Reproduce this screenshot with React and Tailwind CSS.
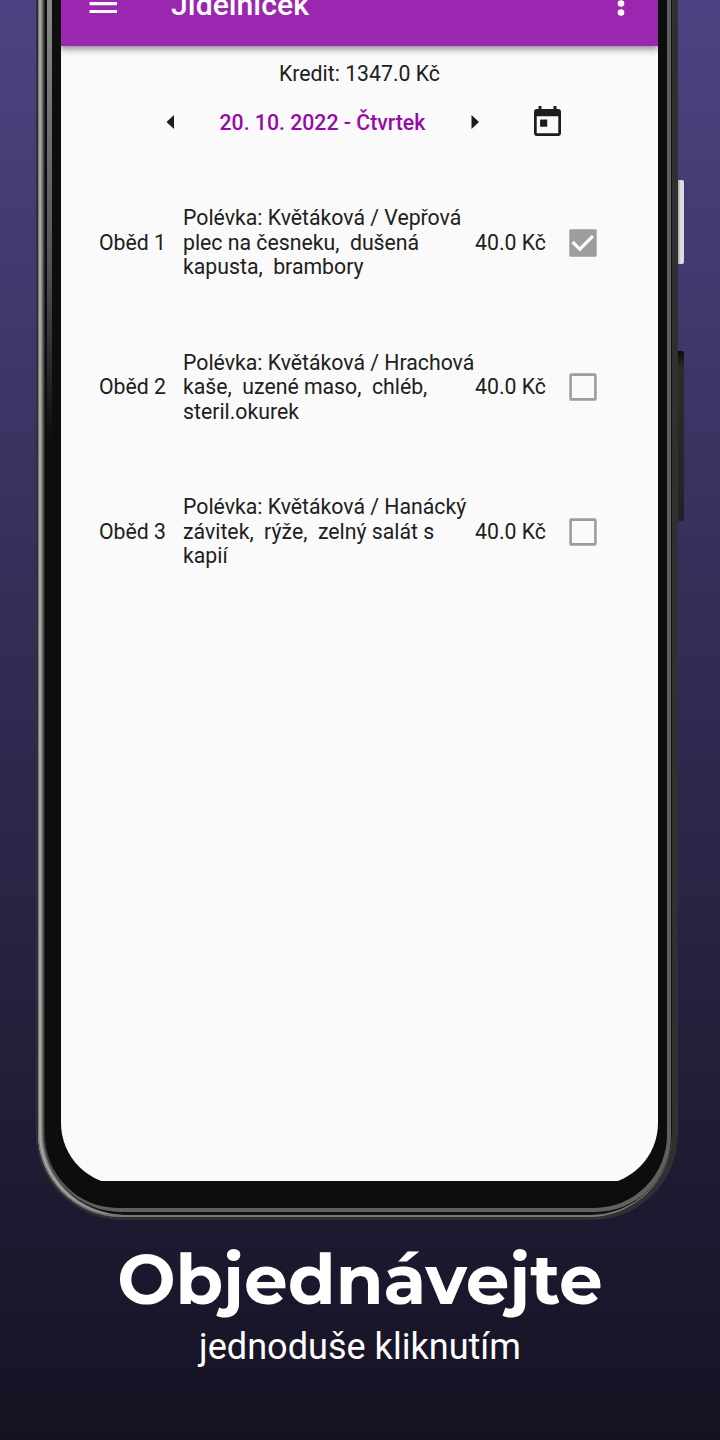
const meals = [
  { name: "Oběd 1", lines: ["Polévka: Květáková / Vepřová", "plec na česneku,\u00a0 dušená", "kapusta,\u00a0 brambory"], price: "40.0 Kč", checked: true },
  { name: "Oběd 2", lines: ["Polévka: Květáková / Hrachová", "kaše,\u00a0 uzené maso,\u00a0 chléb,", "steril.okurek"], price: "40.0 Kč", checked: false },
  { name: "Oběd 3", lines: ["Polévka: Květáková / Hanácký", "závitek,\u00a0 rýže,\u00a0 zelný salát s", "kapií"], price: "40.0 Kč", checked: false },
];

function CheckBox({ checked }) {
  return (
    <svg viewBox="0 0 28 28" className="-mt-px size-7 shrink-0">
      {checked ? (
        <>
          <rect x="0.3" y="0.3" width="27.4" height="27.4" rx="1.5" fill="#9d9d9d" />
          <path d="M3.6 13L10.8 20.2L24 7" fill="none" stroke="#fafafa" strokeWidth="3.2" />
        </>
      ) : (
        <rect x="1.6" y="1.6" width="24.8" height="24.8" rx="0.6" fill="none" stroke="#9d9d9d" strokeWidth="2.6" />
      )}
    </svg>
  );
}

function AppBar() {
  return (
    <header className="relative flex h-[46px] shrink-0 bg-[#9b26af] pl-[28px] text-white shadow-[0_2px_7px_1px_rgba(0,0,0,0.45)]">
      <svg viewBox="0 0 28 14" className="h-[14px] w-7">
        <path d="M0.5 3.7H28M0.5 11.5H28" stroke="currentColor" strokeWidth="3.2" />
      </svg>
      <h1 className="mt-[-15px] ml-[54px] w-[420px] text-[30.2px] leading-10 font-medium whitespace-nowrap">Jídelníček</h1>
      <svg viewBox="0 0 8 18" className="ml-[26px] h-[18px] w-2" fill="currentColor">
        <circle cx="4" cy="3.5" r="3.3" />
        <circle cx="4" cy="12.5" r="3.3" />
      </svg>
    </header>
  );
}

function DateRow() {
  return (
    <div className="mt-4 flex h-8 items-center pl-[105px] text-[#1c1c1c]">
      <svg viewBox="0 0 8 14" className="h-[14px] w-2" fill="currentColor">
        <path d="M8 0V14L0.5 7Z" />
      </svg>
      <div className="ml-[45.5px] w-[206.5px] pt-px text-[21.25px] leading-8 font-medium whitespace-nowrap text-[#960ba8]">
        20. 10. 2022 - Čtvrtek
      </div>
      <svg viewBox="0 0 8 14" className="ml-[45px] h-[14px] w-2" fill="currentColor">
        <path d="M0.5 0V14L8 7Z" />
      </svg>
      <svg viewBox="0 0 28 31" className="-mt-[2px] ml-[55px] h-[30px] w-[27px]" preserveAspectRatio="none" fill="currentColor">
        <path fillRule="evenodd" d="M4.7 0H7.8V3H20.2V0H23.3V3H25Q28 3 28 6V28Q28 31 25 31H3Q0 31 0 28V6Q0 3 3 3H4.7ZM2.8 10.5V28.2H25.2V10.5Z" />
        <rect x="6.3" y="14" width="7.4" height="7.4" />
      </svg>
    </div>
  );
}

function Meal({ meal }) {
  return (
    <li className="flex h-[73px] items-center pl-[38px] text-[21.26px] leading-[24.4px] whitespace-nowrap text-[#202020]">
      <span className="w-[84px] shrink-0">{meal.name}</span>
      <div className="w-[292px] shrink-0">
        {meal.lines.map((line) => (
          <div key={line}>{line}</div>
        ))}
      </div>
      <span className="mr-[22px] w-[72px] shrink-0">{meal.price}</span>
      <CheckBox checked={meal.checked} />
    </li>
  );
}

function Phone() {
  return (
    <div className="relative ml-9 h-[1220px] w-[642px]">
      <div className="absolute top-[180px] left-[642px] h-21 w-1.5 rounded-r-xs bg-linear-to-r from-[#aaa] via-[#e4e2e2] to-[#d8d5dc]" />
      <div className="absolute top-[351px] left-[642px] h-[170px] w-1.5 rounded-r-xs bg-linear-to-b from-[#0b0b0b] via-[#2c2c2c] via-10% to-[#222]" />
      <div className="absolute top-0 left-[11px] h-[440px] w-[5px] bg-linear-to-b from-[#8a8a8a] via-[#555] via-60% to-transparent" />
      <div className="h-full rounded-b-[86px] bg-[#303030] pr-[6px] pb-[3px] pl-[2px]">
        <div className="h-full rounded-b-[83px] bg-[#777] pb-[2px]">
          <div className="h-full rounded-b-[82px] bg-[#111] pr-[1px] pb-[3px] pl-[7px] shadow-[inset_1px_0_0_#777,inset_3px_0_0_#a6a6a6,inset_4px_0_0_#8c8c8c,inset_5px_0_0_#6c6c6c,inset_6px_0_0_#484848,inset_7px_0_0_#282828]">
            <div className="h-full rounded-b-[76px] bg-[#606060] pr-[4px] pb-[4px]">
              <div className="h-full rounded-b-[73px] bg-[#0d0d0d] pr-[9px] pl-4">
                <div className="h-[1181px] overflow-hidden">
                  <main className="h-[1185px] overflow-hidden rounded-b-[62px] bg-[#fafafa]">
                    <AppBar />
                    <p className="mt-3 pl-[218px] text-[21.25px] leading-8 whitespace-nowrap text-[#202020]">Kredit: 1347.0 Kč</p>
                    <DateRow />
                    <ul className="mt-[68.5px] flex flex-col gap-[71.5px]">
                      {meals.map((meal) => (
                        <Meal key={meal.name} meal={meal} />
                      ))}
                    </ul>
                  </main>
                </div>
              </div>
            </div>
          </div>
        </div>
      </div>
    </div>
  );
}

export default function App() {
  return (
    <div className="h-[1440px] w-[720px] overflow-hidden bg-linear-to-b from-[#4e4382] to-[#161223] font-['Roboto',sans-serif]">
      <Phone />
      <section className="flex flex-col items-center text-white">
        <h2 className="mt-[11px] font-['Montserrat','Inter',sans-serif] text-[69.2px] leading-[96px] font-bold whitespace-nowrap">Objednávejte</h2>
        <p className="mt-[-2px] text-[36.1px] leading-[44px] whitespace-nowrap">jednoduše kliknutím</p>
      </section>
    </div>
  );
}
